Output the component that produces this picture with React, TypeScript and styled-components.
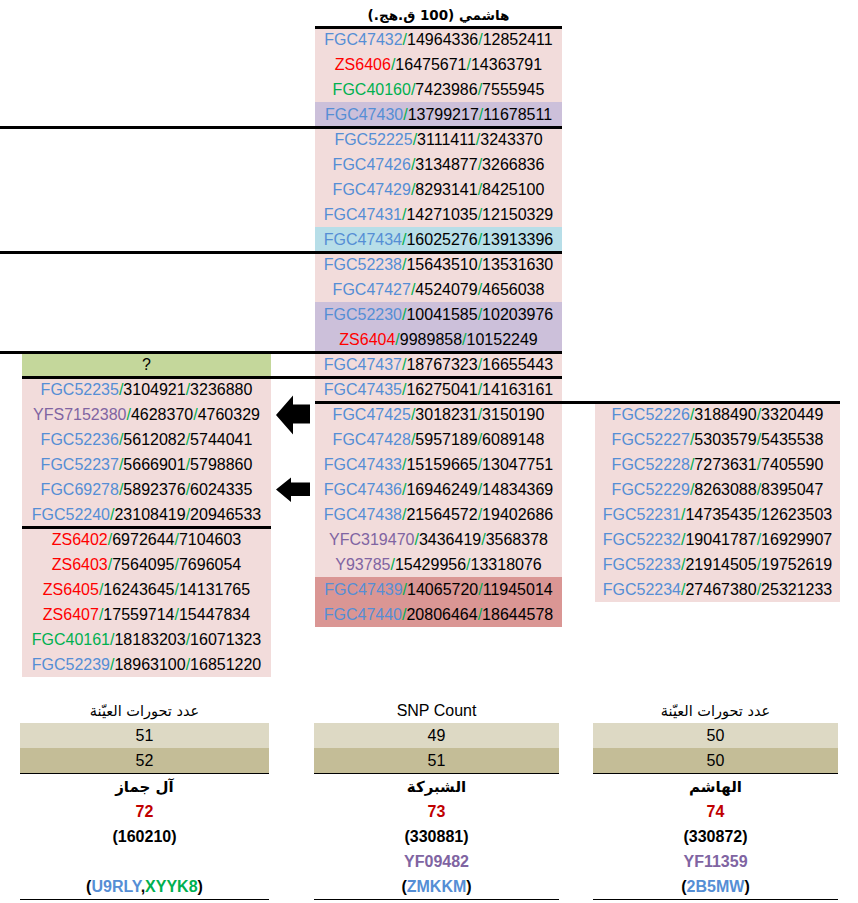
import React from 'react';
import styled, { createGlobalStyle, css } from 'styled-components';

const GlobalStyle = createGlobalStyle`
  html, body { margin: 0; padding: 0; background: #ffffff; }
  body { font-family: "Liberation Sans", Arial, sans-serif; color: #000; }
`;

const C = {
  pink: '#f2dcdb',
  purple: '#ccc0da',
  sky: '#b7dee8',
  rose: '#da9694',
  olive: '#c4d79b',
  sand: '#ddd9c4',
  khaki: '#c4bd97',
  blue: '#558ed5',
  red: '#ff0000',
  green: '#00b050',
  violet: '#8064a2',
  crimson: '#c00000',
};

type Tone = 'blue' | 'red' | 'green' | 'violet';
type Entry = { id: string; tone: Tone; a: string; b: string; bg?: string };

const Page = styled.div`
  width: 858px;
  padding-top: 2px;
`;

const Sheet = styled.div`
  display: grid;
  grid-template-columns: 22px 249px 44px 247px 33px 245px 18px;
  grid-auto-rows: 25px;
`;

const Cell = styled.div<{ $bg?: string; $rule?: boolean }>`
  position: relative;
  display: flex;
  align-items: center;
  justify-content: center;
  background: ${(p) => p.$bg ?? 'transparent'};
  font-size: 16px;
  white-space: nowrap;
  ${(p) =>
    p.$rule &&
    css`
      &::after {
        content: '';
        position: absolute;
        left: 0;
        right: 0;
        bottom: -2px;
        height: 3px;
        background: #000;
        z-index: 2;
      }
    `}
`;

const Title = styled.span`
  font-family: "DejaVu Sans", sans-serif;
  font-weight: bold;
  font-size: 13.5px;
  direction: rtl;
  unicode-bidi: isolate;
`;

const Tag = styled.span<{ $tone: Tone }>`
  color: ${(p) => C[p.$tone]};
`;

const Slash = styled.span`
  color: ${C.green};
`;

const ArrowBox = styled.div`
  position: absolute;
  left: 50%;
  top: 50%;
  transform: translate(-50%, -50%);
  z-index: 3;
  display: flex;
`;

const Summary = styled.div`
  display: grid;
  grid-template-columns: 20px 249px 45px 245px 34px 245px;
  margin-top: 21px;
`;

const SumCol = styled.div<{ $col: number }>`
  grid-column: ${(p) => p.$col};
  display: flex;
  flex-direction: column;
`;

const SumCell = styled.div<{ $bg?: string; $line?: boolean }>`
  height: 25px;
  display: flex;
  align-items: center;
  justify-content: center;
  font-size: 16px;
  background: ${(p) => p.$bg ?? 'transparent'};
  border-bottom: ${(p) => (p.$line ? '1px solid #000' : 'none')};
  white-space: nowrap;
`;

const ArHead = styled.span`
  font-family: "DejaVu Sans", sans-serif;
  font-size: 14.5px;
  direction: rtl;
`;

const ArName = styled.span`
  font-family: "DejaVu Sans", sans-serif;
  font-size: 15px;
  font-weight: bold;
  direction: rtl;
`;

const Bold = styled.span<{ $color?: string }>`
  font-weight: bold;
  color: ${(p) => p.$color ?? '#000'};
`;

const e = (id: string, tone: Tone, a: string, b: string, bg?: string): Entry => ({ id, tone, a, b, bg });

const colB: Record<number, Entry> = {
  1: e('FGC47432', 'blue', '14964336', '12852411'),
  2: e('ZS6406', 'red', '16475671', '14363791'),
  3: e('FGC40160', 'green', '7423986', '7555945'),
  4: e('FGC47430', 'blue', '13799217', '11678511', C.purple),
  5: e('FGC52225', 'blue', '3111411', '3243370'),
  6: e('FGC47426', 'blue', '3134877', '3266836'),
  7: e('FGC47429', 'blue', '8293141', '8425100'),
  8: e('FGC47431', 'blue', '14271035', '12150329'),
  9: e('FGC47434', 'blue', '16025276', '13913396', C.sky),
  10: e('FGC52238', 'blue', '15643510', '13531630'),
  11: e('FGC47427', 'blue', '4524079', '4656038'),
  12: e('FGC52230', 'blue', '10041585', '10203976', C.purple),
  13: e('ZS6404', 'red', '9989858', '10152249', C.purple),
  14: e('FGC47437', 'blue', '18767323', '16655443'),
  15: e('FGC47435', 'blue', '16275041', '14163161'),
  16: e('FGC47425', 'blue', '3018231', '3150190'),
  17: e('FGC47428', 'blue', '5957189', '6089148'),
  18: e('FGC47433', 'blue', '15159665', '13047751'),
  19: e('FGC47436', 'blue', '16946249', '14834369'),
  20: e('FGC47438', 'blue', '21564572', '19402686'),
  21: e('YFC319470', 'violet', '3436419', '3568378'),
  22: e('Y93785', 'violet', '15429956', '13318076'),
  23: e('FGC47439', 'blue', '14065720', '11945014', C.rose),
  24: e('FGC47440', 'blue', '20806464', '18644578', C.rose),
};

const colA: Record<number, Entry> = {
  15: e('FGC52235', 'blue', '3104921', '3236880'),
  16: e('YFS7152380', 'violet', '4628370', '4760329'),
  17: e('FGC52236', 'blue', '5612082', '5744041'),
  18: e('FGC52237', 'blue', '5666901', '5798860'),
  19: e('FGC69278', 'blue', '5892376', '6024335'),
  20: e('FGC52240', 'blue', '23108419', '20946533'),
  21: e('ZS6402', 'red', '6972644', '7104603'),
  22: e('ZS6403', 'red', '7564095', '7696054'),
  23: e('ZS6405', 'red', '16243645', '14131765'),
  24: e('ZS6407', 'red', '17559714', '15447834'),
  25: e('FGC40161', 'green', '18183203', '16071323'),
  26: e('FGC52239', 'blue', '18963100', '16851220'),
};

const colC: Record<number, Entry> = {
  16: e('FGC52226', 'blue', '3188490', '3320449'),
  17: e('FGC52227', 'blue', '5303579', '5435538'),
  18: e('FGC52228', 'blue', '7273631', '7405590'),
  19: e('FGC52229', 'blue', '8263088', '8395047'),
  20: e('FGC52231', 'blue', '14735435', '12623503'),
  21: e('FGC52232', 'blue', '19041787', '16929907'),
  22: e('FGC52233', 'blue', '21914505', '19752619'),
  23: e('FGC52234', 'blue', '27467380', '25321233'),
};

const rules: Record<number, number[]> = {
  0: [3],
  4: [0, 1, 2, 3],
  9: [0, 1, 2, 3],
  13: [0, 1, 2, 3],
  14: [1, 2, 3],
  15: [3, 4, 5],
  20: [1],
};

const BigArrow = () => (
  <svg width="36" height="40" viewBox="0 0 36 40">
    <polygon points="1,20 18,0.5 18,9.5 35,9.5 35,28.5 18,28.5 18,39.5" fill="#000" />
  </svg>
);

const SmallArrow = () => (
  <svg width="36" height="26" viewBox="0 0 36 26">
    <polygon points="1,12.5 16,0.5 16,5.5 35,5.5 35,19 16,19 16,25" fill="#000" />
  </svg>
);

const Data = ({ en }: { en: Entry }) => (
  <span>
    <Tag $tone={en.tone}>{en.id}</Tag>
    <Slash>/</Slash>
    {en.a}
    <Slash>/</Slash>
    {en.b}
  </span>
);

const renderRow = (r: number) => {
  const ruled = rules[r] ?? [];
  const cells: React.ReactNode[] = [];
  for (let c = 0; c < 7; c++) {
    const rule = ruled.includes(c);
    let bg: string | undefined;
    let content: React.ReactNode = null;
    if (c === 3) {
      if (r === 0) content = <Title dir="rtl">هاشمي (100 ق.هج.)</Title>;
      else if (colB[r]) {
        bg = colB[r].bg ?? C.pink;
        content = <Data en={colB[r]} />;
      }
    } else if (c === 1) {
      if (r === 14) {
        bg = C.olive;
        content = '?';
      } else if (colA[r]) {
        bg = colA[r].bg ?? C.pink;
        content = <Data en={colA[r]} />;
      }
    } else if (c === 5) {
      if (colC[r]) {
        bg = C.pink;
        content = <Data en={colC[r]} />;
      }
    } else if (c === 2) {
      if (r === 16) content = <ArrowBox><BigArrow /></ArrowBox>;
      if (r === 19) content = <ArrowBox><SmallArrow /></ArrowBox>;
    }
    cells.push(
      <Cell key={`${r}-${c}`} $bg={bg} $rule={rule}>
        {content}
      </Cell>
    );
  }
  return cells;
};

type Sum = {
  head: React.ReactNode;
  v1: string;
  v2: string;
  name: string;
  rank: string;
  code: string;
  yf?: string;
  hap: React.ReactNode;
};

const sums: { col: number; s: Sum }[] = [
  {
    col: 2,
    s: {
      head: <ArHead dir="rtl">عدد تحورات العيّنة</ArHead>,
      v1: '51',
      v2: '52',
      name: 'آل جماز',
      rank: '72',
      code: '(160210)',
      hap: (
        <Bold>
          (<Bold $color={C.blue}>U9RLY</Bold>,<Bold $color={C.green}>XYYK8</Bold>)
        </Bold>
      ),
    },
  },
  {
    col: 4,
    s: {
      head: <span>SNP Count</span>,
      v1: '49',
      v2: '51',
      name: 'الشبركة',
      rank: '73',
      code: '(330881)',
      yf: 'YF09482',
      hap: (
        <Bold>
          (<Bold $color={C.blue}>ZMKKM</Bold>)
        </Bold>
      ),
    },
  },
  {
    col: 6,
    s: {
      head: <ArHead dir="rtl">عدد تحورات العيّنة</ArHead>,
      v1: '50',
      v2: '50',
      name: 'الهاشم',
      rank: '74',
      code: '(330872)',
      yf: 'YF11359',
      hap: (
        <Bold>
          (<Bold $color={C.blue}>2B5MW</Bold>)
        </Bold>
      ),
    },
  },
];

export default function App() {
  const rows = Array.from({ length: 27 }, (_, r) => r);
  return (
    <>
      <GlobalStyle />
      <Page>
        <Sheet>{rows.map((r) => renderRow(r))}</Sheet>
        <Summary>
          {sums.map(({ col, s }) => (
            <SumCol key={col} $col={col}>
              <SumCell>{s.head}</SumCell>
              <SumCell $bg={C.sand}>{s.v1}</SumCell>
              <SumCell $bg={C.khaki} $line>
                {s.v2}
              </SumCell>
              <SumCell>
                <ArName dir="rtl">{s.name}</ArName>
              </SumCell>
              <SumCell>
                <Bold $color={C.crimson}>{s.rank}</Bold>
              </SumCell>
              <SumCell>
                <Bold>{s.code}</Bold>
              </SumCell>
              <SumCell>{s.yf && <Bold $color={C.violet}>{s.yf}</Bold>}</SumCell>
              <SumCell $line>{s.hap}</SumCell>
            </SumCol>
          ))}
        </Summary>
      </Page>
    </>
  );
}
